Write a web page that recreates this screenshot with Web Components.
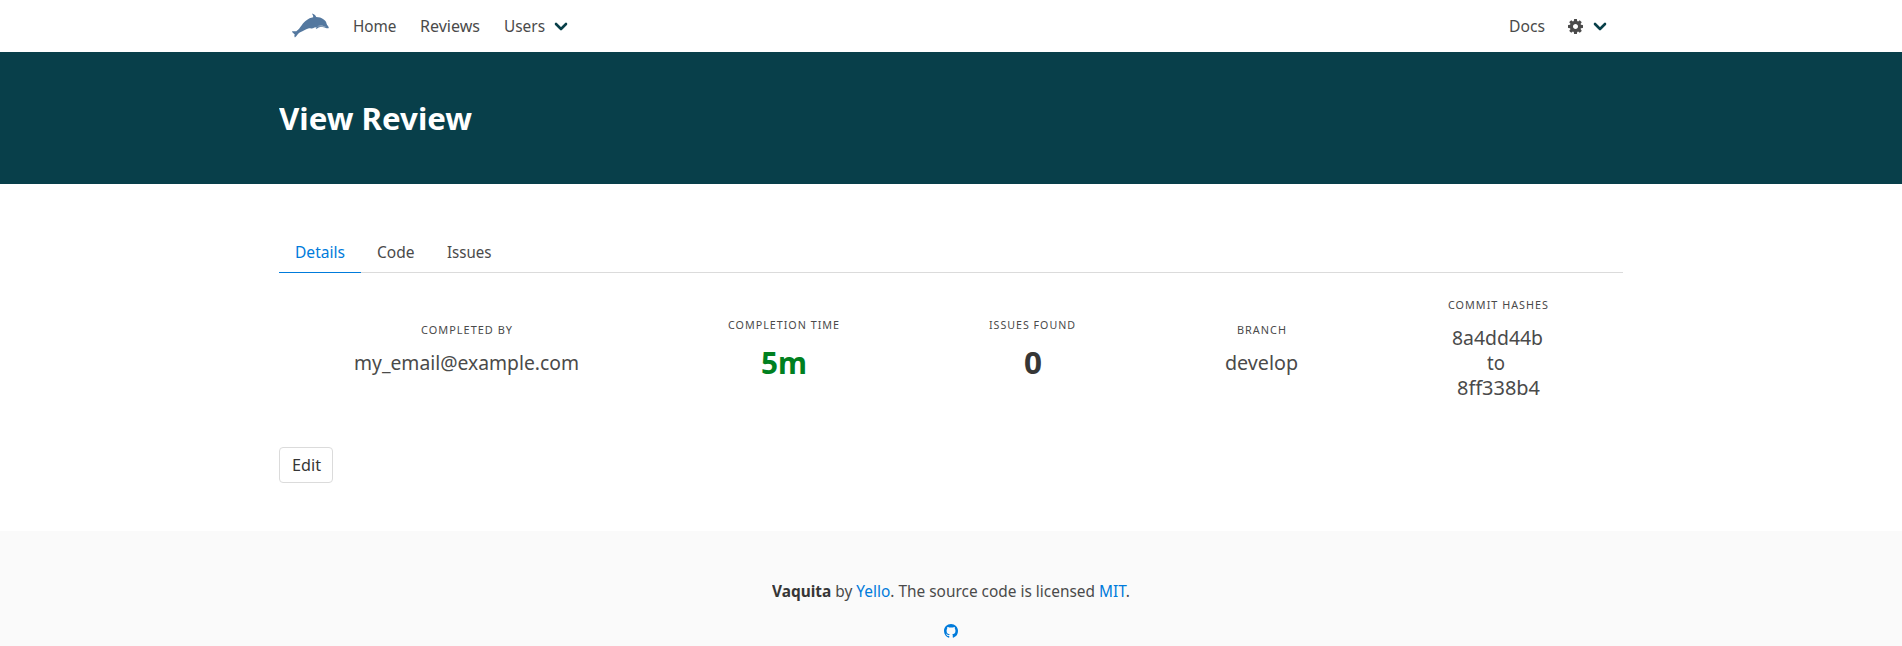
<!DOCTYPE html>
<html lang="en">
<head>
<meta charset="utf-8">
<title>View Review</title>
<style>
html{overflow:hidden}
body{margin:0;background:#fff;color:#4a4a4a;font:15.6px/24px "Noto Sans","Open Sans",sans-serif}
</style>
</head>
<body>
<vq-navbar></vq-navbar>
<vq-hero><fit-text w="193">View Review</fit-text></vq-hero>
<vq-section>
  <vq-tabs></vq-tabs>
  <vq-level>
    <vq-stat><fit-text slot="label" w="92">COMPLETED BY</fit-text><fit-text w="225">my_email@example.com</fit-text></vq-stat>
    <vq-stat class="big good"><fit-text slot="label" w="112">COMPLETION TIME</fit-text><fit-text w="46">5m</fit-text></vq-stat>
    <vq-stat class="big"><fit-text slot="label" w="87">ISSUES FOUND</fit-text><fit-text w="18">0</fit-text></vq-stat>
    <vq-stat><fit-text slot="label" w="50">BRANCH</fit-text><fit-text w="73">develop</fit-text></vq-stat>
    <vq-stat><fit-text slot="label" w="101">COMMIT HASHES</fit-text><fit-text w="91">8a4dd44b</fit-text><fit-text w="18" style="margin-right:4px">to</fit-text><fit-text w="83">8ff338b4</fit-text></vq-stat>
  </vq-level>
  <vq-button><fit-text w="29">Edit</fit-text></vq-button>
</vq-section>
<vq-footer></vq-footer>
<script>
function define(name, html) {
  const t = document.createElement('template');
  t.innerHTML = html;
  customElements.define(name, class extends HTMLElement {
    constructor() {
      super();
      this.attachShadow({mode: 'open'}).append(t.content.cloneNode(true));
    }
  });
}

define('vq-navbar', `<style>
:host{display:block;height:52px}
nav{width:1344px;margin:0 auto;height:52px;display:flex;align-items:center}
svg{display:block;flex:none}
.logo{margin:0 23px 0 12px}
.item{display:flex;align-items:center;padding-right:24px}
.arrow{margin-left:9px}
.end{margin-left:auto;display:flex;align-items:center;padding-right:16px}
</style><nav>
<svg class="logo" width="38" height="26" viewBox="0 0 38 26"><path fill="#54789f" d="M.8 18.500C2.300 18.100 3.900 18.300 5.300 18.300 7.500 16.800 8.800 14.800 10.700 12.300 13.500 8.500 17 5.200 22.200 4.300 22.300 2.900 21.800 1.800 20.800.6 23 1 24.600 2.300 25.200 4.100 28.200 4.200 30.500 4.900 32 6 34 7.200 35.200 8.500 35.500 10.500 35.900 12 37.800 13.600 37.800 14.900 37.300 15.600 35.800 15.300 34.800 14.900 33.200 14.300 31.500 13.900 29.200 14 28 14 27.500 14.900 25 16 24.500 15.600 25.600 14.800 25.500 14.300L23.500 14.600C22 15.600 20.300 15.700 19.500 15.300 17.500 15.300 15.500 16 14.200 16.800 12.300 17.900 10.500 18.800 8.700 19.500 6.800 20.300 6 22.900 3.900 24.500 3.300 23.500 3.300 22.200 3.700 21.200 2.800 20.500 1.400 19.800.8 18.500Z"/><path fill="#b2c0d0" d="M26 13.300c3-1.300 6-1.200 9.500.9-3-.6-6-.6-9.500-.9Z"/></svg>
<div class="item"><fit-text style="margin-left:.5px" w="43.5">Home</fit-text></div>
<div class="item"><fit-text w="60">Reviews</fit-text></div>
<div class="item"><fit-text w="41">Users</fit-text><vq-chevron class="arrow"></vq-chevron></div>
<div class="end"><div class="item" style="padding-right:23px"><fit-text w="36">Docs</fit-text></div>
<svg width="15" height="15" viewBox="0 0 1536 1536"><path fill="#4a4a4a" d="M1024 768q0-106-75-181t-181-75-181 75-75 181 75 181 181 75 181-75 75-181zm512-109v222q0 12-8 23t-20 13l-185 28q-19 54-39 91 35 50 107 138 10 12 10 25t-9 23q-27 37-99 108t-94 71q-12 0-26-9l-138-108q-44 23-91 38-16 136-29 186-7 28-36 28H657q-14 0-24.500-8.500T621 1506l-28-184q-49-16-90-37l-141 107q-10 9-25 9-14 0-25-11-126-114-165-168-7-10-7-23 0-12 8-23 15-21 51-66.500t54-70.500q-27-50-41-99L29 913q-13-2-21-12.500T0 877V655q0-12 8-23t19-13l186-28q14-46 39-92-40-57-107-138-10-12-10-24 0-10 9-23 26-36 98.500-107.500T337 135q13 0 26 10l138 107q44-23 91-38 16-136 29-186 7-28 36-28h222q14 0 24.500 8.500T915 30l28 184q49 16 90 37l142-107q9-9 24-9 13 0 25 10 129 119 165 170 7 8 7 22 0 12-8 23-15 21-51 66.500t-54 70.500q26 50 41 98l183 28q13 2 21 12.500t8 23.500z"/></svg><vq-chevron style="margin-left:10px"></vq-chevron></div>
</nav>`);

define('vq-chevron', `<style>:host{display:block}svg{display:block}</style>
<svg width="14" height="10" viewBox="0 0 14 10"><path d="M2 3l5 5 5-5" fill="none" stroke="#083f49" stroke-width="2.6" stroke-linecap="round" stroke-linejoin="round"/></svg>`);

define('vq-hero', `<style>
:host{display:block;background:#083f4a;padding:48px 0}
h1{width:1344px;margin:0 auto;color:#fff;font-size:31px;line-height:36px;font-weight:700}
</style><h1><slot></slot></h1>`);

define('vq-section', `<style>:host{display:block;width:1344px;margin:0 auto;padding:48px 0}</style><slot></slot>`);

define('vq-tabs', `<style>
:host{display:flex;height:41px;box-shadow:inset 0 -1px #dbdbdb}
div{padding:8px 16px;height:24px;border-bottom:1px solid transparent}
.on{color:#007bdb;border-color:#007bdb}
</style><div class="on"><fit-text w="50">Details</fit-text></div><div><fit-text w="37.5">Code</fit-text></div><div><fit-text w="44.5">Issues</fit-text></div>`);

define('vq-level', `<style>:host{display:flex;justify-content:space-around;align-items:center;height:103px;margin:24px 0 47px}</style><slot></slot>`);

define('vq-stat', `<style>
:host{display:block;text-align:center}
.label{font-size:10.7px;line-height:16.5px;letter-spacing:1px;height:16.5px;margin-bottom:11px;display:flex;justify-content:center}
.value{display:flex;flex-direction:column;align-items:center;font-size:19.5px;line-height:25px}
:host(.big) .value{font-size:31px;line-height:36px;font-weight:700;color:#363636}
:host(.good) .value{color:#008020}
</style><div class="label"><slot name="label"></slot></div><div class="value"><slot></slot></div>`);

define('vq-button', `<style>
:host{display:flex;width:54px;height:36px;box-sizing:border-box;border:1px solid #dbdbdb;border-radius:4px;align-items:center;justify-content:center;color:#363636}
</style><slot></slot>`);

define('vq-footer', `<style>
:host{display:flex;flex-direction:column;align-items:center;background:#fafafa;padding-top:48px;height:67px}
p{margin:0 0 16px;display:flex;height:24px}
.link{color:#007bdb}
b{font-weight:700;color:#363636}
svg{display:block;margin:5px 0}
</style><p><fit-text w="358"><b>Vaquita</b> by <span class="link">Yello</span>. The source code is licensed <span class="link">MIT</span>.</fit-text></p>
<svg width="14" height="14" viewBox="0 0 16 16"><path fill="#007bdb" d="M8 0C3.58 0 0 3.58 0 8c0 3.54 2.29 6.53 5.47 7.59.4.07.55-.17.55-.38 0-.19-.01-.82-.01-1.49-2.01.37-2.53-.49-2.69-.94-.09-.23-.48-.94-.82-1.13-.28-.15-.68-.52-.01-.53.63-.01 1.08.58 1.23.82.72 1.21 1.87.87 2.33.66.07-.52.28-.87.51-1.07-1.78-.2-3.64-.89-3.64-3.95 0-.87.31-1.59.82-2.15-.08-.2-.36-1.02.08-2.12 0 0 .67-.21 2.2.82.64-.18 1.32-.27 2-.27s1.36.09 2 .27c1.53-1.04 2.2-.82 2.2-.82.44 1.1.16 1.92.08 2.12.51.56.82 1.27.82 2.15 0 3.07-1.87 3.75-3.65 3.95.29.25.54.73.54 1.48 0 1.07-.01 1.93-.01 2.2 0 .21.15.46.55.38A8.01 8.01 0 0 0 16 8c0-4.42-3.58-8-8-8Z"/></svg>`);

// Sets a line of text in a fixed measure, condensing its glyphs to suit.
define('fit-text', `<style>
:host{display:block;white-space:nowrap}
span{display:inline-block;transform-origin:0 50%;vertical-align:top}
</style><span><slot></slot></span>`);
document.querySelectorAll('*').forEach(function fit(el) {
  if (el.localName === 'fit-text') {
    const w = parseFloat(el.getAttribute('w'));
    const span = el.shadowRoot.querySelector('span');
    const k = w / span.getBoundingClientRect().width;
    el.style.width = w + 'px';
    span.style.transform = 'scaleX(' + k + ')';
  }
  if (el.shadowRoot) el.shadowRoot.querySelectorAll('*').forEach(fit);
});
</script>
</body>
</html>
